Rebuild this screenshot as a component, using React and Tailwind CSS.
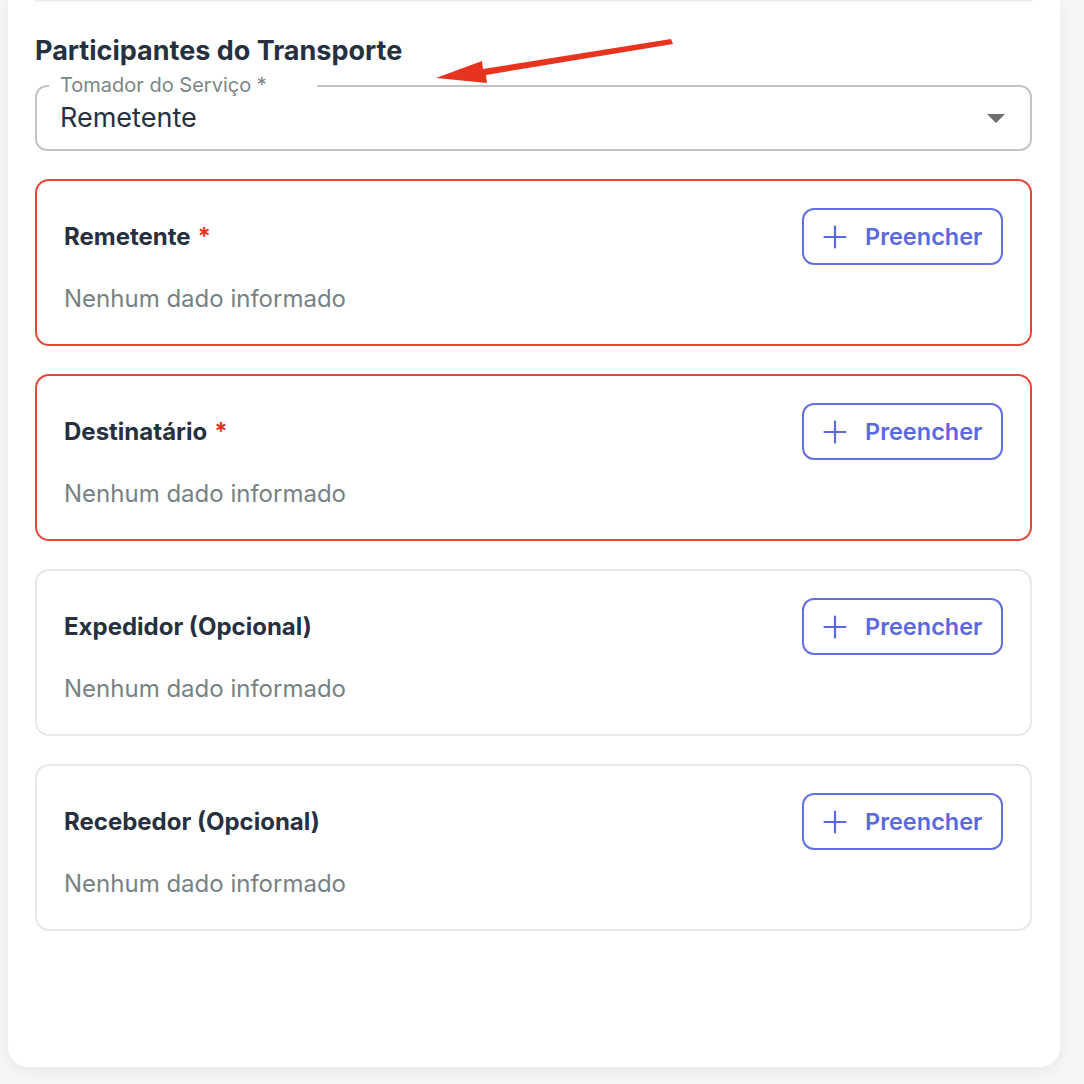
const participants = [
  { name: "Remetente", required: true },
  { name: "Destinatário", required: true },
  { name: "Expedidor (Opcional)", required: false },
  { name: "Recebedor (Opcional)", required: false },
];

function PlusIcon() {
  return (
    <svg width="24" height="24" viewBox="0 0 24 24" fill="none" stroke="currentColor" strokeWidth="2.2" strokeLinecap="round">
      <line x1="12" y1="1.5" x2="12" y2="22.5" />
      <line x1="1.5" y1="12" x2="22.5" y2="12" />
    </svg>
  );
}

function ParticipantCard({ name, required }) {
  return (
    <div
      className={`h-[167px] rounded-[14px] border-2 bg-white pl-[27px] pr-[27px] pt-[27px] ${
        required ? "border-[#e2483a]" : "border-[#e8e8e8]"
      }`}
    >
      <div className="flex items-center justify-between">
        <div className="text-[24px] font-bold leading-8 text-[#263040]">
          {name}
          {required && <span className="ml-[7px] text-[#e3341f]">*</span>}
        </div>
        <button className="flex h-[57px] w-[201px] items-center gap-[18px] rounded-xl border-2 border-[#6470e2] pl-[19px] text-[23.5px] font-semibold text-[#5b69df]">
          <PlusIcon />
          Preencher
        </button>
      </div>
      <p className="mt-[18px] text-[24px] leading-8 text-[#768284]">Nenhum dado informado</p>
    </div>
  );
}

export default function App() {
  return (
    <div
      className="relative min-h-screen bg-[#f6f6f6] pl-2 pr-6"
      style={{ fontFamily: "Inter, 'Noto Sans', sans-serif" }}
    >
      <div className="h-[1067px] rounded-b-[20px] bg-white pl-[27px] pr-[28px] shadow-[0_4px_14px_rgba(0,0,0,0.06)]">
        {/* Divider from the previous section */}
        <div className="h-px bg-[#e8e8e8] shadow-[0_1px_2px_rgba(0,0,0,0.08)]" />

        <h2 className="mt-[34px] text-[27px] font-bold leading-8 text-[#263040]">
          Participantes do Transporte
        </h2>

        {/* Tomador select */}
        <div className="relative mt-[18px] flex h-[66px] items-center justify-between rounded-xl border-2 border-[#c4c4c4] pl-[23px] pr-[25px]">
          <span className="absolute -top-[14px] left-[12px] w-[268px] bg-white pl-[11px] text-[20px] leading-6 text-[#7b8687]">
            Tomador do Serviço *
          </span>
          <span className="text-[27px] leading-8 text-[#263040]">Remetente</span>
          <svg width="18" height="9" viewBox="0 0 18 9">
            <polygon points="0,0 18,0 9,9" fill="#6e6e6e" />
          </svg>
        </div>

        <div className="mt-[28px] flex flex-col gap-[28px]">
          {participants.map((p) => (
            <ParticipantCard key={p.name} {...p} />
          ))}
        </div>
      </div>

      {/* Annotation arrow */}
      <svg className="pointer-events-none absolute left-0 top-0" width="1084" height="1084">
        <polygon
          points="436,78 482,61 483,69 671,39 673,44 486,75 487,83"
          fill="#e8341f"
        />
      </svg>
    </div>
  );
}
